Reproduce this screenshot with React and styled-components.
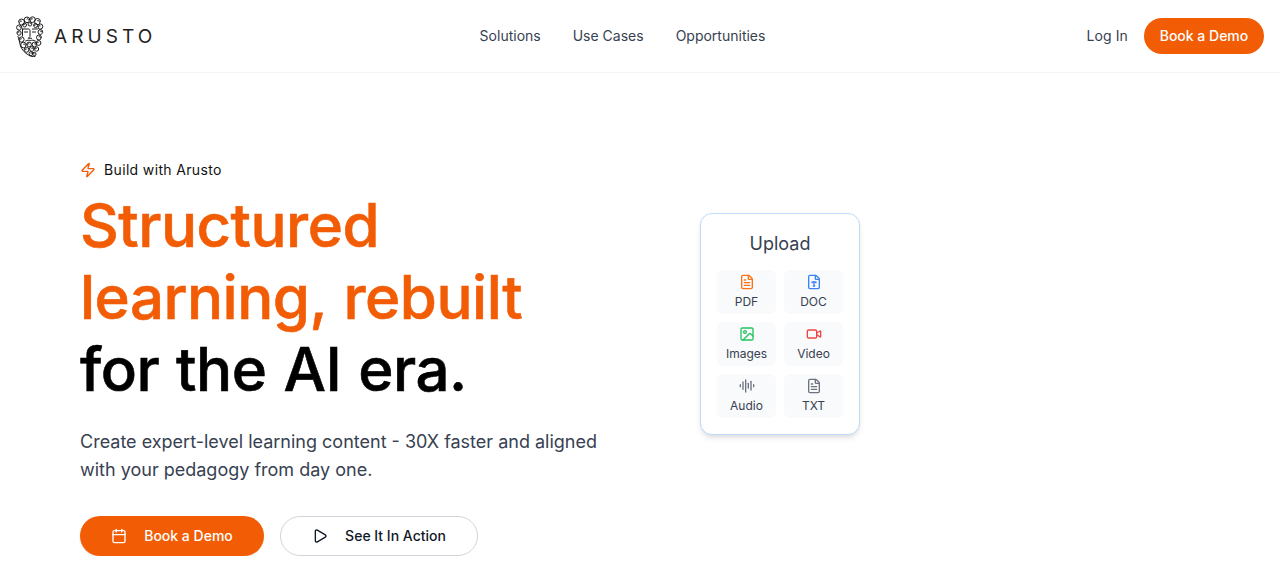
import styled, { createGlobalStyle } from "styled-components"
import { AudioLines, Calendar, FileText, FileType, Image, Play, Video, Zap } from "lucide-react"

const GlobalStyle = createGlobalStyle`
    * {
        box-sizing: border-box;
    }

    body {
        margin: 0;
        background: #fff;
        font-family: Inter, "Liberation Sans", sans-serif;
        overflow: hidden;
    }
`

const Header = styled.header`
    display: flex;
    justify-content: space-between;
    align-items: center;
    height: 73px;
    padding: 0 16px;
    border-bottom: 1px solid #f3f4f6;
`

const Brand = styled.a`
    display: flex;
    align-items: center;
    gap: 10px;
    color: #1f1f1f;
`

const BrandName = styled.span`
    font-size: 19px;
    font-weight: 400;
    letter-spacing: 4.1px;
`

const Nav = styled.nav`
    display: flex;
    gap: 32px;
    margin-left: 2px;

    a {
        font-size: 14px;
        font-weight: 400;
        line-height: 20px;
        color: #374151;
    }
`

const HeaderActions = styled.div`
    display: flex;
    align-items: center;
    gap: 16px;
`

const LogIn = styled.a`
    font-size: 14px;
    line-height: 20px;
    font-weight: 400;
    letter-spacing: 0.1px;
    color: #374151;
`

const SmallCta = styled.a`
    display: flex;
    align-items: center;
    justify-content: center;
    width: 120px;
    height: 36px;
    border-radius: 18px;
    background: #f25c05;
    color: #fff;
    font-size: 14px;
    line-height: 20px;
    font-weight: 500;
`

const Hero = styled.main`
    display: grid;
    grid-template-columns: 620px 160px;
    padding: 86px 0 0 80px;
`

const Copy = styled.section`
    display: flex;
    flex-direction: column;
`

const Eyebrow = styled.div`
    display: flex;
    align-items: center;
    gap: 8px;
    height: 22px;
    margin-bottom: 8px;
    font-size: 14px;
    line-height: 20px;
    font-weight: 400;
    letter-spacing: 0.35px;
    color: #111;

    svg {
        color: #f25c05;
    }
`

const Title = styled.h1`
    margin: 0;
    font-size: 60px;
    line-height: 72px;
    font-weight: 500;
    letter-spacing: -0.5px;
    word-spacing: 1.5px;
    -webkit-text-stroke: 0.6px currentColor;
    color: #000;

    span {
        display: block;
        color: #f25c05;
    }
`

const Lead = styled.p`
    margin: 23px 0 0;
    font-size: 18px;
    line-height: 28px;
    color: #374151;
`

const Actions = styled.div`
    display: flex;
    gap: 16px;
    margin-top: 32px;
`

const HeroButton = styled.a`
    display: flex;
    align-items: center;
    justify-content: center;
    gap: 17px;
    width: ${(p) => (p.$primary ? "184px" : "198px")};
    height: 40px;
    border-radius: 20px;
    border: ${(p) => (p.$primary ? "0" : "1px solid #d1d5db")};
    background: ${(p) => (p.$primary ? "#f25c05" : "#fff")};
    color: ${(p) => (p.$primary ? "#fff" : "#111827")};
    box-shadow: ${(p) => (p.$primary ? "0 1px 2px rgba(0,0,0,.1)" : "none")};
    font-size: 14px;
    line-height: 20px;
    font-weight: 500;
`

const UploadCard = styled.aside`
    width: 160px;
    height: 222px;
    margin-top: 54px;
    padding: 16px;
    border: 1px solid #bfdbfe;
    border-radius: 12px;
    background: #fff;
    box-shadow: 0 4px 6px -1px rgba(0, 0, 0, 0.1), 0 2px 4px -2px rgba(0, 0, 0, 0.1);
`

const CardTitle = styled.h3`
    margin: 0 0 12px;
    font-size: 18px;
    line-height: 28px;
    font-weight: 400;
    text-align: center;
    color: #374151;
`

const Tiles = styled.div`
    display: grid;
    grid-template-columns: 59px 59px;
    grid-auto-rows: 44px;
    gap: 8px;
`

const Tile = styled.div`
    display: flex;
    flex-direction: column;
    align-items: center;
    justify-content: center;
    gap: 4px;
    border-radius: 6px;
    background: #f9fafb;
    font-size: 12px;
    line-height: 16px;
    color: #374151;

    svg {
        color: ${(p) => p.$tone};
    }
`

// small spiral used for the hair and beard of the logo
const curl = ([x, y, r, dir]) => {
    const s = dir > 0 ? 1 : 0
    const d = dir > 0 ? 1 : -1
    return `M${x - r * d} ${y}A${r} ${r} 0 1 ${s} ${x} ${y + r}A${r * 0.62} ${r * 0.62} 0 0 ${s} ${x - r * 0.5 * d} ${y - r * 0.1}A${r * 0.3} ${r * 0.3} 0 0 ${s} ${x} ${y - r * 0.3}`
}

const curls = [
    [5.5, 6, 3, 1], [11, 3.8, 2.8, -1], [16.5, 3.6, 2.8, 1], [21.5, 5.5, 3, -1],
    [24.2, 10.5, 2.6, 1], [3.2, 11.5, 2.6, -1], [24.4, 16, 2.4, -1], [8.5, 9, 2, 1],
    [14, 8, 2, -1], [19.5, 9.5, 2, 1], [3, 17, 2.2, 1],
    [5.5, 23.5, 2.6, 1], [23, 21.5, 2.5, -1], [7.5, 29, 2.8, -1], [13, 28.5, 2.4, 1],
    [18.5, 28.5, 2.4, -1], [22.5, 27, 2.4, 1], [10.5, 33.8, 2.4, 1], [15.8, 33, 2.3, -1],
    [20.5, 33, 2.2, 1], [15, 37.6, 2, -1], [18.2, 38, 1.8, 1],
]

const Logo = () => (
    <svg width="28" height="41" viewBox="0 0 28 41" fill="none" stroke="#1a1a1a" strokeWidth="1" strokeLinecap="round">
        <path d={curls.map(curl).join("")} />
        <path d="M6.500 13H12.500C13.500 13 14 13.500 14 14.500V20.500L12.300 22.300H15.500M16.500 13H21.500M6.500 13V20M8.500 16H11.500M16.500 16H19.500M9.500 25C11.500 24 13 24 14.200 24.600 15.500 24 18 24 19.500 25" />
        <path d="M2 20.500C3 23 3.500 26 4.500 30 6 34 9 37 12.500 39 14.500 40.500 17 41 19 40.500" />
    </svg>
)

const tiles = [
    { label: "PDF", Icon: FileText, tone: "#f97316" },
    { label: "DOC", Icon: FileType, tone: "#3b82f6" },
    { label: "Images", Icon: Image, tone: "#22c55e" },
    { label: "Video", Icon: Video, tone: "#ef4444" },
    { label: "Audio", Icon: AudioLines, tone: "#6b7280" },
    { label: "TXT", Icon: FileText, tone: "#6b7280" },
]

const App = () => {
    return (
        <>
            <GlobalStyle />
            <Header>
                <Brand>
                    <Logo />
                    <BrandName>ARUSTO</BrandName>
                </Brand>
                <Nav>
                    <a>Solutions</a>
                    <a>Use Cases</a>
                    <a>Opportunities</a>
                </Nav>
                <HeaderActions>
                    <LogIn>Log In</LogIn>
                    <SmallCta>Book a Demo</SmallCta>
                </HeaderActions>
            </Header>
            <Hero>
                <Copy>
                    <Eyebrow>
                        <Zap size={16} strokeWidth={2} />
                        Build with Arusto
                    </Eyebrow>
                    <Title>
                        <span>Structured</span>
                        <span>learning, rebuilt</span>
                        for the AI era.
                    </Title>
                    <Lead>
                        Create expert-level learning content - 30X faster and aligned
                        <br />
                        with your pedagogy from day one.
                    </Lead>
                    <Actions>
                        <HeroButton $primary>
                            <Calendar size={16} strokeWidth={2} />
                            Book a Demo
                        </HeroButton>
                        <HeroButton>
                            <Play size={16} strokeWidth={2} />
                            See It In Action
                        </HeroButton>
                    </Actions>
                </Copy>
                <UploadCard>
                    <CardTitle>Upload</CardTitle>
                    <Tiles>
                        {tiles.map(({ label, Icon, tone }) => (
                            <Tile key={label} $tone={tone}>
                                <Icon size={16} strokeWidth={2} />
                                {label}
                            </Tile>
                        ))}
                    </Tiles>
                </UploadCard>
            </Hero>
        </>
    )
}

export default App
